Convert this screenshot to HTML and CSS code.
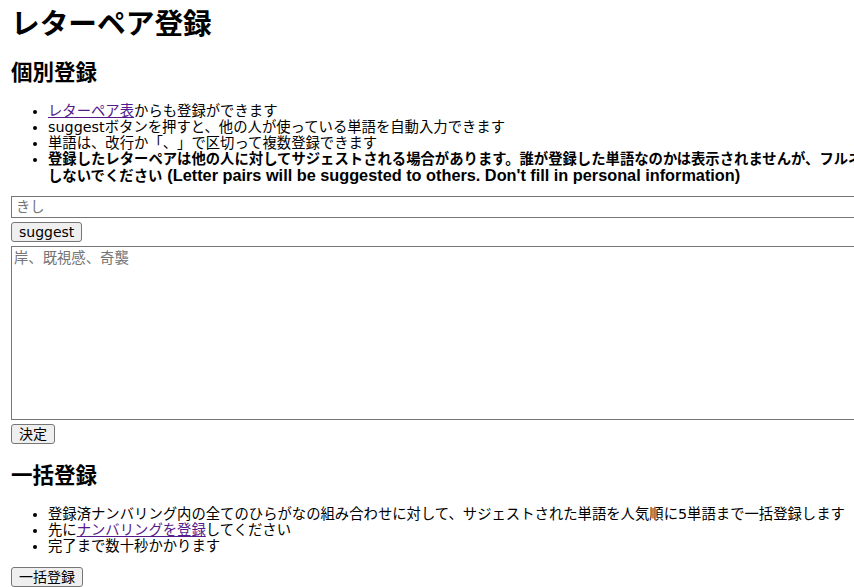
FILE: index.html
```html
<!DOCTYPE html>
<html lang="ja">
<head>
<meta charset="utf-8">
<title>レターペア登録</title>
<link rel="stylesheet" href="styles.css">
</head>
<body>
<div class="page">
  <h1 class="title">レターペア登録</h1>
  <h2 class="section">個別登録</h2>
  <ul class="notes">
    <li><a href="#" class="link">レターペア表</a>からも登録ができます</li>
    <li>suggestボタンを押すと、他の人が使っている単語を自動入力できます</li>
    <li>単語は、改行か「、」で区切って複数登録できます</li>
    <li class="strong">登録したレターペアは他の人に対してサジェストされる場合があります。誰が登録した単語なのかは表示されませんが、フルネームなどの個人情報は入力しないでください <span class="en">(Letter pairs will be suggested to others. Don't fill in personal information)</span></li>
  </ul>
  <form class="entry">
    <input class="field" type="text" placeholder="きし">
    <button class="btn" type="button">suggest</button>
    <textarea class="area" placeholder="岸、既視感、奇襲"></textarea>
    <button class="btn" type="button">決定</button>
  </form>
  <h2 class="section second">一括登録</h2>
  <ul class="notes">
    <li>登録済ナンバリング内の全てのひらがなの組み合わせに対して、サジェストされた単語を人気順に5単語まで一括登録します</li>
    <li>先に<a href="#" class="link">ナンバリングを登録</a>してください</li>
    <li>完了まで数十秒かかります</li>
  </ul>
  <div class="bulk">
    <button class="btn" type="button">一括登録</button>
  </div>
</div>
</body>
</html>
```

FILE: styles.css
```css
html, body {
  margin: 0;
  padding: 0;
  background: #ffffff;
  overflow: hidden;
}
body {
  font-family: "DejaVu Sans", "Noto Sans CJK JP", sans-serif;
  font-size: 14.35px;
  color: #000000;
  text-spacing-trim: space-all;
}
.page {
  width: 1032px;
  padding: 8px 0 0 11px;
}
.title {
  margin: 0;
  font-family: "Liberation Sans", "Noto Sans CJK JP", sans-serif;
  font-size: 28.7px;
  line-height: 32px;
  font-weight: bold;
}
.section {
  margin: 21px 0 0;
  font-family: "Liberation Sans", "Noto Sans CJK JP", sans-serif;
  font-size: 21.5px;
  line-height: 24px;
  font-weight: bold;
}
.section.second {
  margin-top: 20px;
}
.notes {
  margin: 18px 0 0;
  padding-left: 37px;
  line-height: 16px;
}
.strong {
  font-weight: bold;
}
.en {
  font-family: "Liberation Sans", sans-serif;
  font-size: 16.3px;
  line-height: 1;
}
.link {
  color: #551a8b;
  text-decoration: underline;
}
.entry {
  margin: 12px 0 0;
  display: flex;
  flex-direction: column;
  align-items: flex-start;
  gap: 4px;
}
.field {
  box-sizing: border-box;
  width: 100%;
  height: 22px;
  margin: 0;
  padding: 1px 4px;
  border: 1px solid #767676;
  border-radius: 0;
  font-family: "Liberation Sans", "Noto Sans CJK JP", sans-serif;
  font-size: 14.35px;
  line-height: 18px;
  color: #000;
  background: #fff;
}
.area {
  box-sizing: border-box;
  width: 100%;
  height: 174px;
  margin: 0;
  padding: 2px 2px;
  border: 1px solid #767676;
  border-radius: 0;
  font-family: "Liberation Sans", "Noto Sans CJK JP", sans-serif;
  font-size: 14.35px;
  line-height: 18px;
  resize: none;
  background: #fff;
  text-spacing-trim: space-all;
}
.field::placeholder,
.area::placeholder {
  color: #757575;
}
.btn {
  box-sizing: border-box;
  height: 20px;
  margin: 0;
  padding: 0 7px;
  border: 1px solid #767676;
  border-radius: 3px;
  background: #efefef;
  color: #000;
  font-family: "DejaVu Sans", "Noto Sans CJK JP", sans-serif;
  font-size: 14px;
  line-height: 18px;
}
.bulk {
  margin-top: 13px;
}
```
